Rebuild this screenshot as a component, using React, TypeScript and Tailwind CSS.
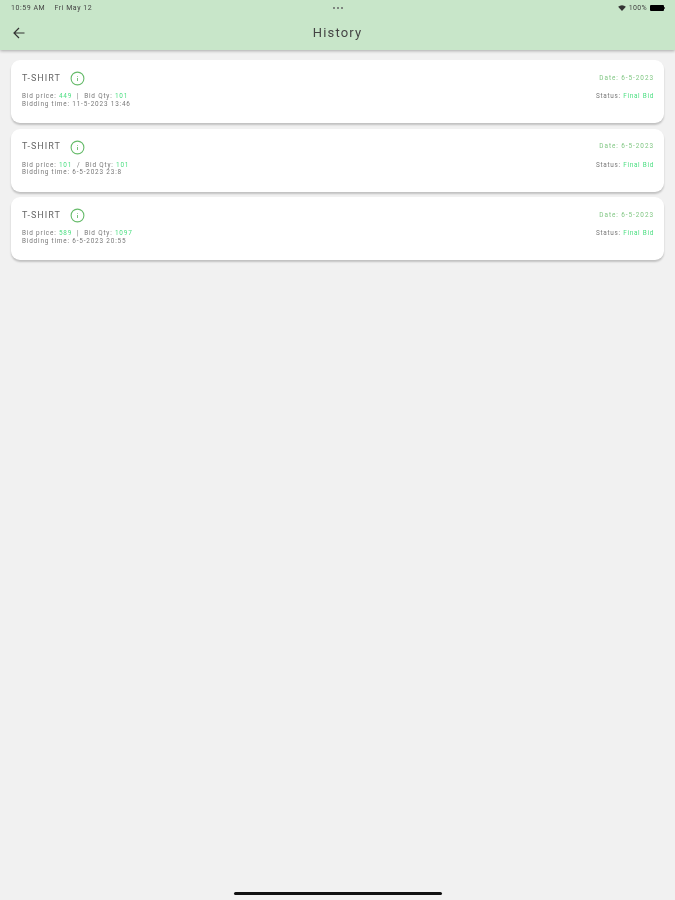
import React from "react";

const rows = [
  { price: "449", sep: "|", qty: "101", time: "11-5-2023 13:46" },
  { price: "101", sep: "/", qty: "101", time: "6-5-2023 23:8" },
  { price: "589", sep: "|", qty: "1097", time: "6-5-2023 20:55" },
];

function Card({ r }: { r: (typeof rows)[number] }) {
  return (
    <div className="h-[63px] rounded-[9px] bg-white pl-[11px] pr-[10px] pt-[10px] shadow-[0_2px_2px_rgba(0,0,0,0.2)] flex justify-between">
      <div>
        <div className="flex items-center h-[17px]">
          <span className="text-[9px] tracking-[1.05px] text-[#666]">T-SHIRT</span>
          <svg className="ml-[9px]" width="15" height="15" viewBox="0 0 15 15" fill="none">
            <circle cx="7.5" cy="7.5" r="6.4" stroke="#66bb6a" strokeWidth="1.1" />
            <path d="M7.5 7v3M7.5 5v.7" stroke="#66bb6a" strokeWidth="0.9" />
          </svg>
        </div>
        <div className="mt-[6px] text-[6.4px] leading-[7.5px] tracking-[0.82px] text-[#777] whitespace-pre">
          Bid price: <span className="text-[#4ade80]">{r.price}</span>{"  "}{r.sep}{"  "}Bid Qty: <span className="text-[#4ade80]">{r.qty}</span>
        </div>
        <div className="text-[6.4px] leading-[7.5px] tracking-[0.82px] text-[#777]">Bidding time: {r.time}</div>
      </div>
      <div className="flex flex-col items-end">
        <div className="h-[17px] flex items-center text-[6.4px] tracking-[0.95px] text-[#81c784]">Date: 6-5-2023</div>
        <div className="mt-[6px] text-[6.4px] leading-[7.5px] tracking-[0.72px] text-[#777]">
          Status: <span className="text-[#4ade80]">Final Bid</span>
        </div>
      </div>
    </div>
  );
}

export default function App() {
  return (
    <div className="h-[900px] w-[675px] overflow-hidden bg-[#f1f1f1] flex flex-col font-['Roboto',sans-serif] blur-[0.5px]">
      <header className="h-[50px] shrink-0 bg-[#c8e6c9] shadow-[0_1px_3px_rgba(0,0,0,0.3)]">
        <div className="h-[16px] pl-[11px] pr-[10px] flex items-center justify-between text-[7px] text-[#444]">
          <span className="w-[120px] tracking-[0.55px] whitespace-pre">10:59 AM    Fri May 12</span>
          <span className="flex gap-[2px]">
            <i className="w-[2px] h-[2px] rounded-full bg-[#666]" />
            <i className="w-[2px] h-[2px] rounded-full bg-[#666]" />
            <i className="w-[2px] h-[2px] rounded-full bg-[#666]" />
          </span>
          <span className="w-[120px] flex items-center justify-end gap-[3px]">
            <svg width="8" height="6" viewBox="0 0 9 7"><path d="M0 2a6.5 6.5 0 0 1 9 0L4.5 7z" fill="#333" /></svg>
            <span className="tracking-[0.3px]">100%</span>
            <span className="flex items-center">
              <span className="w-[14px] h-[6px] rounded-[1px] bg-black" />
              <span className="w-[1px] h-[2px] bg-[#555]" />
            </span>
          </span>
        </div>
        <div className="h-[34px] px-[13px] flex items-center">
          <svg width="12" height="12" viewBox="0 0 12 12" fill="none" stroke="#333" strokeWidth="1.2">
            <path d="M11.5 6H1M6 1 1 6l5 5" />
          </svg>
          <span className="flex-1 pr-[12px] text-center text-[13px] tracking-[1.15px] text-[#444]">History</span>
        </div>
      </header>
      <main className="flex-1 px-[11px] pt-[10px] flex flex-col gap-[5.5px]">
        {rows.map((r, i) => <Card key={i} r={r} />)}
      </main>
      <div className="h-[8px] shrink-0 flex justify-center">
        <div className="w-[208px] h-[3px] rounded-full bg-[#111]" />
      </div>
    </div>
  );
}
